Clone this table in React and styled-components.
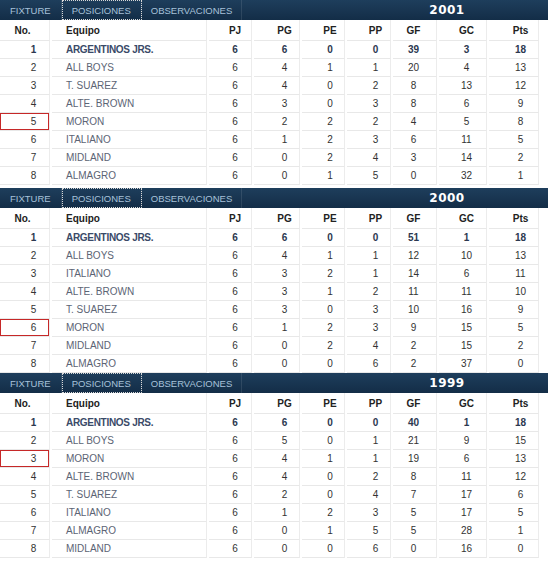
import React from "react";
import styled, { createGlobalStyle } from "styled-components";

const GlobalStyle = createGlobalStyle`
  body {
    margin: 0;
    background: #fff;
    font-family: "Liberation Sans", Arial, sans-serif;
  }
`;

const Page = styled.div`
  width: 548px;
`;

const Section = styled.div`
  &:first-child {
    margin-bottom: 3px;
  }
`;

const Bar = styled.div`
  display: flex;
  align-items: stretch;
  height: 20px;
  background: linear-gradient(#1e3e5c, #132d47);
`;

const Tab = styled.div`
  display: flex;
  align-items: center;
  padding: 0 ${(p) => p.$pad}px;
  font-size: 9.5px;
  color: #a7c2da;
  border-right: 1px solid rgba(255, 255, 255, 0.1);
  outline: ${(p) => (p.$active ? "1px dotted #d8d8d8" : "none")};
  outline-offset: -1px;
`;

const Year = styled.div`
  margin-left: auto;
  width: 202px;
  display: flex;
  align-items: center;
  justify-content: center;
  color: #fff;
  font-family: "DejaVu Sans", Verdana, sans-serif;
  font-weight: bold;
  font-size: 12px;
  letter-spacing: 0.5px;
`;

const Table = styled.table`
  table-layout: fixed;
  border-collapse: separate;
  border-spacing: 2px 0;
  margin-left: -2px;
  font-size: 10px;
`;

const Th = styled.th`
  height: 20px;
  padding: 0 ${(p) => p.$pr || 0}px 0 ${(p) => p.$pl || 0}px;
  text-align: ${(p) => p.$align || "center"};
  font-weight: bold;
  font-size: 10px;
  color: #222;
  border-bottom: 1px solid #e8e8e8;
  border-right: 1px solid #ececec;
`;

const Td = styled.td`
  height: 17px;
  padding: 0 ${(p) => p.$pr || 0}px 0 ${(p) => p.$pl || 0}px;
  text-align: ${(p) => p.$align || "center"};
  font-weight: ${(p) => (p.$lead ? "bold" : "normal")};
  color: ${(p) => (p.$team ? (p.$lead ? "#3a4a68" : "#5c6474") : p.$lead ? "#2c3850" : "#333")};
  letter-spacing: ${(p) => (p.$team && p.$lead ? "-0.3px" : "0")};
  white-space: nowrap;
  border-bottom: 1px solid #e8e8e8;
  border-right: 1px solid #ececec;
  box-shadow: ${(p) => (p.$mark ? "inset 0 0 0 1px #c62828" : "none")};
`;

// ancho de cada columna + corrimiento del texto
const cols = [
  { key: "no", label: "No.", w: 50, hpl: 0, hpr: 4, pl: 18 },
  { key: "team", label: "Equipo", w: 155, align: "left", pl: 14 },
  { key: "pj", label: "PJ", w: 43, pl: 10 },
  { key: "pg", label: "PG", w: 46, pl: 16 },
  { key: "pe", label: "PE", w: 43, pl: 14 },
  { key: "pp", label: "PP", w: 44, pl: 14 },
  { key: "gf", label: "GF", w: 44, pr: 2 },
  { key: "gc", label: "GC", w: 48, pl: 8 },
  { key: "pts", label: "Pts", w: 50, pl: 14 },
];

const seasons = [
  {
    year: "2001",
    mark: 5,
    rows: [
      ["ARGENTINOS JRS.", 6, 6, 0, 0, 39, 3, 18],
      ["ALL BOYS", 6, 4, 1, 1, 20, 4, 13],
      ["T. SUAREZ", 6, 4, 0, 2, 8, 13, 12],
      ["ALTE. BROWN", 6, 3, 0, 3, 8, 6, 9],
      ["MORON", 6, 2, 2, 2, 4, 5, 8],
      ["ITALIANO", 6, 1, 2, 3, 6, 11, 5],
      ["MIDLAND", 6, 0, 2, 4, 3, 14, 2],
      ["ALMAGRO", 6, 0, 1, 5, 0, 32, 1],
    ],
  },
  {
    year: "2000",
    mark: 6,
    rows: [
      ["ARGENTINOS JRS.", 6, 6, 0, 0, 51, 1, 18],
      ["ALL BOYS", 6, 4, 1, 1, 12, 10, 13],
      ["ITALIANO", 6, 3, 2, 1, 14, 6, 11],
      ["ALTE. BROWN", 6, 3, 1, 2, 11, 11, 10],
      ["T. SUAREZ", 6, 3, 0, 3, 10, 16, 9],
      ["MORON", 6, 1, 2, 3, 9, 15, 5],
      ["MIDLAND", 6, 0, 2, 4, 2, 15, 2],
      ["ALMAGRO", 6, 0, 0, 6, 2, 37, 0],
    ],
  },
  {
    year: "1999",
    mark: 3,
    rows: [
      ["ARGENTINOS JRS.", 6, 6, 0, 0, 40, 1, 18],
      ["ALL BOYS", 6, 5, 0, 1, 21, 9, 15],
      ["MORON", 6, 4, 1, 1, 19, 6, 13],
      ["ALTE. BROWN", 6, 4, 0, 2, 8, 11, 12],
      ["T. SUAREZ", 6, 2, 0, 4, 7, 17, 6],
      ["ITALIANO", 6, 1, 2, 3, 5, 17, 5],
      ["ALMAGRO", 6, 0, 1, 5, 5, 28, 1],
      ["MIDLAND", 6, 0, 0, 6, 0, 16, 0],
    ],
  },
];

function SeasonTable({ season }) {
  return (
    <Section>
      <Bar>
        <Tab $pad={10}>FIXTURE</Tab>
        <Tab $pad={10} $active>POSICIONES</Tab>
        <Tab $pad={9}>OBSERVACIONES</Tab>
        <Year>{season.year}</Year>
      </Bar>
      <Table>
        <colgroup>
          {cols.map((c) => (
            <col key={c.key} style={{ width: c.w }} />
          ))}
        </colgroup>
        <thead>
          <tr>
            {cols.map((c) => (
              <Th key={c.key} $align={c.align} $pl={c.hpl ?? c.pl} $pr={c.hpr ?? c.pr}>
                {c.label}
              </Th>
            ))}
          </tr>
        </thead>
        <tbody>
          {season.rows.map((r, i) => {
            const pos = i + 1;
            const lead = pos === 1;
            return (
              <tr key={r[0]}>
                <Td $pl={cols[0].pl} $lead={lead} $mark={pos === season.mark}>
                  {pos}
                </Td>
                <Td $align="left" $pl={cols[1].pl} $team $lead={lead}>
                  {r[0]}
                </Td>
                {r.slice(1).map((v, j) => (
                  <Td key={j} $pl={cols[j + 2].pl} $pr={cols[j + 2].pr} $lead={lead}>
                    {v}
                  </Td>
                ))}
              </tr>
            );
          })}
        </tbody>
      </Table>
    </Section>
  );
}

export default function App() {
  return (
    <Page>
      <GlobalStyle />
      {seasons.map((s) => (
        <SeasonTable key={s.year} season={s} />
      ))}
    </Page>
  );
}
